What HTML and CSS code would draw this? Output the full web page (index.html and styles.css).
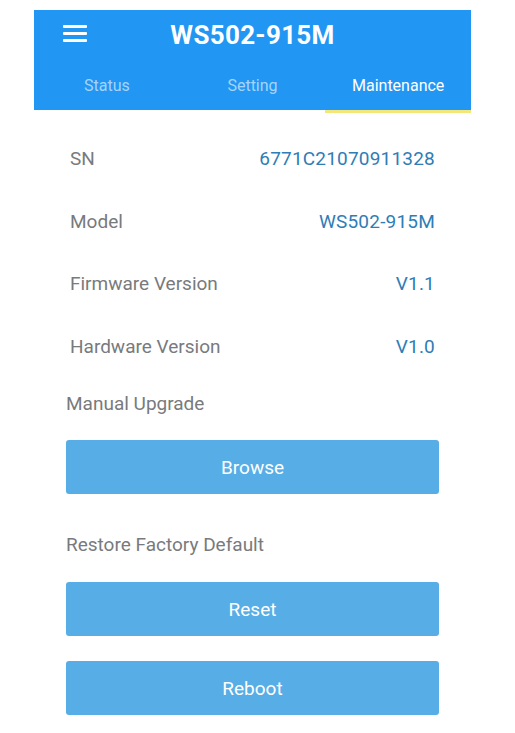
FILE: index.html
```html
<!DOCTYPE html>
<html>
<head>
<meta charset="utf-8">
<link rel="stylesheet" href="styles.css">
</head>
<body>
<div class="screen">
  <header class="header">
    <div class="appbar">
      <div class="menu">
        <span class="bar"></span><span class="bar"></span><span class="bar"></span>
      </div>
      <div class="title">WS502-915M</div>
      <div class="spacer"></div>
    </div>
    <nav class="tabs">
      <div class="tab">Status</div>
      <div class="tab">Setting</div>
      <div class="tab active">Maintenance</div>
    </nav>
  </header>
  <section class="info">
    <div class="row"><span class="label">SN</span><span class="value">6771C21070911328</span></div>
    <div class="row"><span class="label">Model</span><span class="value">WS502-915M</span></div>
    <div class="row"><span class="label">Firmware Version</span><span class="value">V1.1</span></div>
    <div class="row"><span class="label">Hardware Version</span><span class="value">V1.0</span></div>
  </section>
  <section class="actions">
    <div class="section-label">Manual Upgrade</div>
    <button class="btn">Browse</button>
    <div class="section-label second">Restore Factory Default</div>
    <button class="btn">Reset</button>
    <button class="btn">Reboot</button>
  </section>
</div>
</body>
</html>
```
FILE: styles.css
```css
html, body {
  margin: 0;
  padding: 0;
  background: #ffffff;
}
body {
  font-family: Roboto, "Noto Sans", Arial, sans-serif;
}
.screen {
  width: 437px;
  margin: 10px 0 0 34px;
}
.header {
  display: flex;
  flex-direction: column;
}
.appbar {
  height: 50px;
  background: #2196f3;
  display: grid;
  grid-template-columns: 1fr auto 1fr;
  align-items: center;
}
.menu {
  display: flex;
  flex-direction: column;
  gap: 4px;
  width: 24px;
  margin-left: 29px;
  margin-top: -3px;
}
.bar {
  display: block;
  height: 3px;
  background: #ffffff;
  border-radius: 1px;
}
.title {
  color: #ffffff;
  font-weight: 700;
  font-size: 26px;
  letter-spacing: 0.3px;
  line-height: 30px;
}
.tabs {
  display: grid;
  grid-template-columns: repeat(3, 1fr);
}
.tab {
  height: 50px;
  display: flex;
  align-items: center;
  justify-content: center;
  background: #2196f3;
  background-clip: padding-box;
  border-bottom: 3px solid transparent;
  color: rgba(255, 255, 255, 0.6);
  font-size: 16px;
}
.tab.active {
  color: #ffffff;
  border-bottom-color: #f3e77c;
}
.info {
  margin-top: 15px;
  padding: 0 36px;
  display: flex;
  flex-direction: column;
}
.row {
  height: 62.6px;
  display: flex;
  align-items: center;
  justify-content: space-between;
  font-size: 19px;
  line-height: 24px;
}
.label {
  color: #787a7d;
}
.value {
  color: #2f7db6;
  letter-spacing: 0.2px;
}
.actions {
  padding: 0 32px;
  display: flex;
  flex-direction: column;
}
.section-label {
  margin-top: 14px;
  margin-bottom: 24px;
  font-size: 19px;
  line-height: 24px;
  color: #787a7d;
}
.btn {
  height: 54px;
  border: none;
  border-radius: 3px;
  background: #57ade6;
  color: #ffffff;
  font-family: Roboto, "Noto Sans", Arial, sans-serif;
  font-size: 19px;
  padding: 0;
  margin: 0 0 25px 0;
}
.btn + .section-label.second {
  margin-top: 14px;
  margin-bottom: 25px;
}
```
